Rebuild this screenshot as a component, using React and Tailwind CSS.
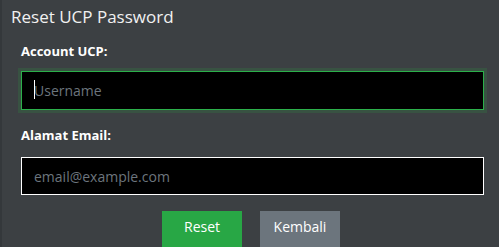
export default function App() {
  return (
    <div
      className="w-[499px] h-[247px] overflow-hidden bg-[#3c4043] border-l-2 border-[#34383b] text-white"
      style={{ fontFamily: '"Open Sans", "Noto Sans", sans-serif' }}
    >
      <div className="pl-[9px] pt-[5px] text-[17px] leading-[24px] text-[#f1f1f1]">Reset UCP Password</div>
      <div className="pl-[19px] pr-[15px]">
        <div className="mt-[12px] text-[13px] font-bold leading-[20px]">Account UCP:</div>
        <div className="relative mt-[10px]">
          <input
            className="block w-full h-[39px] bg-black border border-[#2bb04a] shadow-[0_0_0_3px_rgba(40,167,69,0.18)] px-[12px] text-[14px] text-white placeholder-[#6c757d] outline-none"
            placeholder="Username"
          />
          <span className="absolute left-[13px] top-[9px] w-px h-[19px] bg-white" />
        </div>
        <div className="mt-[15px] text-[13px] font-bold leading-[20px]">Alamat Email:</div>
        <input
          className="mt-[12px] block w-full h-[38px] bg-black border border-white px-[12px] text-[14px] text-white placeholder-[#6c757d] outline-none"
          placeholder="email@example.com"
        />
        <div className="mt-[16px] flex justify-center gap-[18px] pr-[3px]">
          <button className="w-[80px] h-[38px] pt-[4px] leading-[24px] self-start flex justify-center bg-[#28a745] text-[14px] text-white">Reset</button>
          <button className="w-[80px] h-[38px] pt-[4px] leading-[24px] self-start flex justify-center bg-[#6c757d] text-[14px] text-white">Kembali</button>
        </div>
      </div>
    </div>
  );
}
